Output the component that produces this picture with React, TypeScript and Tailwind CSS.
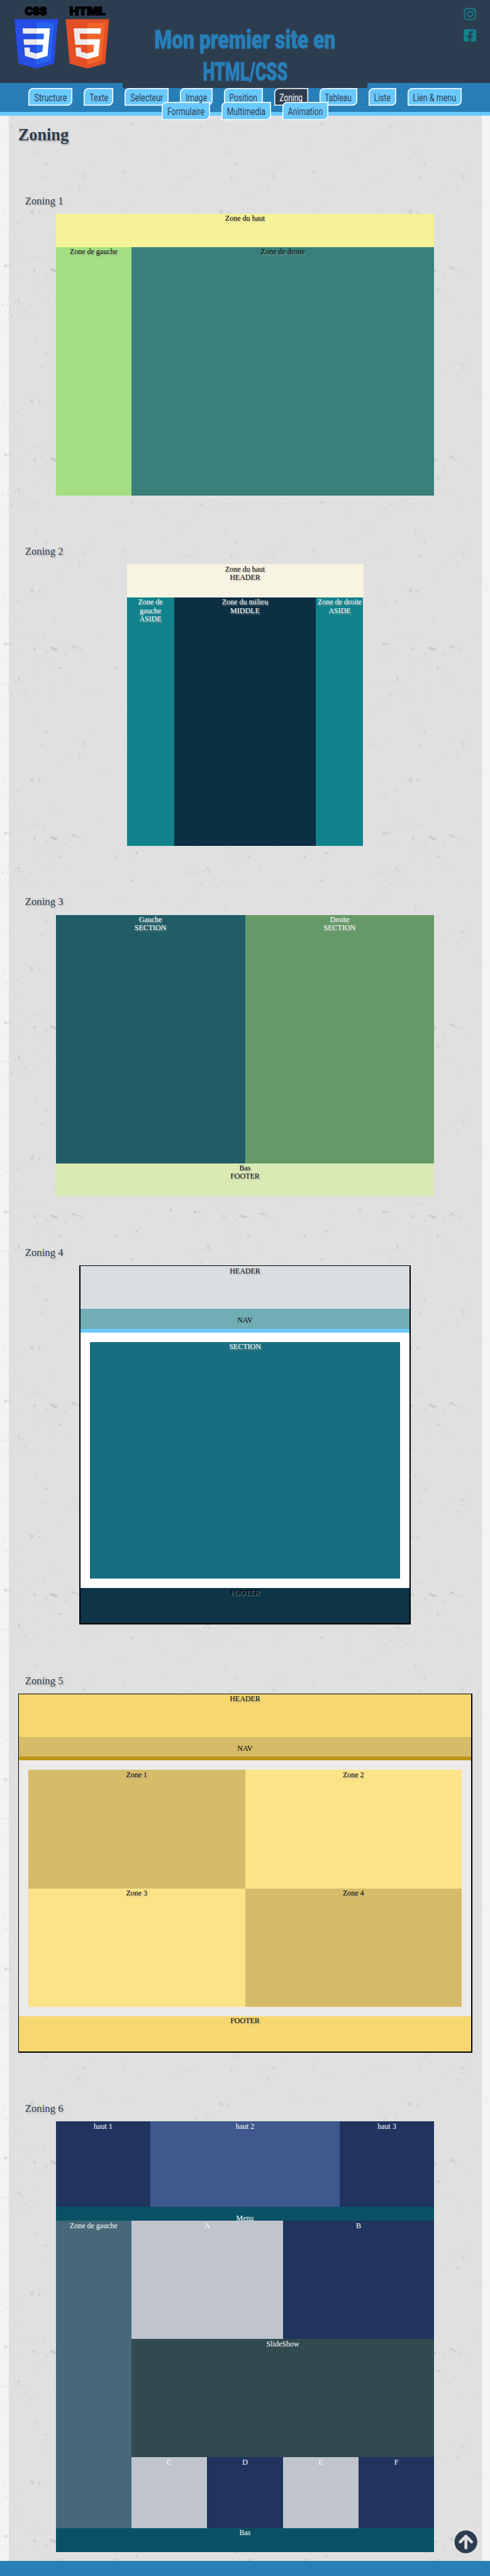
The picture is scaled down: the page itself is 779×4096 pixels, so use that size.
import { useLayoutEffect, useRef, useState, type ReactNode } from 'react';
import { FaArrowCircleUp, FaFacebookSquare, FaInstagram } from 'react-icons/fa';

/* Condensed display text: squeezes its content to the given width. */
function Fit({ width, className = '', children }: { width: number; className?: string; children: ReactNode }) {
  const ref = useRef<HTMLSpanElement>(null);
  const [scale, setScale] = useState(1);
  useLayoutEffect(() => {
    if (ref.current) setScale(width / ref.current.offsetWidth);
  }, [width]);
  return (
    <span className={`flex justify-center whitespace-nowrap ${className}`} style={{ width }}>
      <span ref={ref} className="block shrink-0" style={{ transform: `scaleX(${scale})` }}>
        {children}
      </span>
    </span>
  );
}

/* x, y, rx, ry of the specks in one 400px paper tile */
const specks: number[][] = [
  [78, 322, 2, 2], [97, 347, 2.5, 2], [194, 350, 1.5, 1.5], [264, 363, 2, 2], [89.5, 375.5, 2, 2],
  [262, 376.5, 1.3, 1.3], [176, 368, 1.5, 1.5], [179, 373, 1.6, 3], [180, 381, 1, 2], [172, 369, 1, 1],
  [168, 395, 2, 2], [292.5, 393.7, 2, 1.5], [395, 376, 2.2, 1.6], [388, 374, 1, 1.5], [67, 46, 4.5, 1.8],
  [68, 50, 3.5, 1.8], [83, 50, 2.2, 2], [38, 71, 1.8, 1.8], [13, 79, 1.8, 1.8], [9, 53, 1.5, 1.5],
  [224, 36, 2, 1.2], [216, 29, 1.6, 1.1], [268, 44, 1.5, 1.2], [346, 337, 1.7, 1.5], [116, 105, 1.2, 1.2],
  [79, 144, 2.4, 1.6], [93, 146, 1.7, 1.6], [45, 141, 1.4, 1.3], [12, 161.7, 4.2, 3.2], [21, 161, 2, 1.8],
  [72, 170, 2.6, 1.6], [74, 173, 2, 1.6], [110, 170, 4.5, 3], [117, 173, 5, 3], [155, 166.5, 4, 2.8],
  [163, 170, 2.6, 1.8], [170, 172, 1.6, 1.4], [174, 176, 1.5, 1.5], [37, 181, 1.4, 1.5], [99.5, 180, 2, 1.6],
  [138, 184, 2.3, 1.2], [80, 192, 1.1, 2], [100, 197, 1.4, 1.2], [11, 188, 1.4, 1.4], [184, 190, 1.2, 1],
  [361, 158, 2.8, 2.8], [307, 159, 1.8, 1.5], [368, 179, 1.3, 1.3], [289.5, 203, 2.8, 3], [295, 197, 1.4, 1.5],
  [245, 212, 2.5, 2.7], [125.5, 212, 2.7, 2.6], [131, 212, 1.2, 1.2], [107, 209.5, 1.4, 1.2], [76, 220, 1.2, 1],
  [279, 215, 1.2, 1], [148, 236.7, 1.7, 1.7], [40, 235, 2.8, 2.6], [42, 242, 1.7, 2.2], [33, 240, 1.8, 1.8],
  [48, 243, 1.4, 1.3], [103.5, 240, 1.7, 1.3], [280, 262, 2.7, 2.5], [52, 258.6, 2, 1.6], [25, 267, 2.2, 1.7],
  [46, 268, 1.2, 1.2], [62, 274, 1.7, 1.5], [70, 262.5, 1.4, 1.1], [77, 264, 1.7, 1], [106.5, 271.5, 1.7, 1.3],
  [202, 263.5, 1.2, 1.2], [177, 266, 1.3, 1], [5, 244.5, 1.8, 1.6], [15.5, 245, 1.4, 1.7], [396, 249, 1.6, 1.4],
  [13, 277, 1.3, 1.3], [13, 293.5, 1.6, 1.6], [340, 296, 1.3, 1.2], [336, 266, 1.2, 1.2], [393, 303, 1.2, 1.1],
  [377, 315, 1.1, 1], [16, 366, 1.3, 1.3], [154, 370, 1, 1], [125, 17, 1, 1], [283, 38, 1.2, 1], [58, 150, 1.2, 1],
  [145, 393, 1, 1], [255, 303, 1, 1.3], [371, 395, 1.3, 1], [32, 106, 1, 1],
  [42, 112, 1.3, 1], [208, 138, 1.2, 1.1], [117, 115, 1.2, 1.2],
];

function Paper() {
  return (
    <svg className="absolute inset-0 -z-10 h-full w-full" aria-hidden="true">
      <defs>
        <pattern id="paper" width="400" height="400" patternUnits="userSpaceOnUse" patternTransform="scale(0.752 0.7522)">
          <rect width="400" height="400" fill="#f3f3f3" />
          {specks.map(([x, y, rx, ry], i) => (
            <ellipse key={i} cx={x} cy={y} rx={rx} ry={ry} fill="#000" opacity="0.085" />
          ))}
        </pattern>
      </defs>
      <rect width="100%" height="100%" fill="url(#paper)" />
    </svg>
  );
}

function Logos() {
  return (
    <svg viewBox="30 4 200 142" className="mt-[3px] ml-[22.6px] h-[106.8px] w-[150.4px] overflow-visible">
      <g fontFamily="Inter, Roboto, sans-serif" fontWeight="900" fontSize="23.4" fill="#000" stroke="#000" strokeWidth="1.8">
        <text x="52" y="32" textLength="46.5" lengthAdjust="spacingAndGlyphs">CSS</text>
        <text x="146.5" y="32" textLength="76" lengthAdjust="spacingAndGlyphs">HTML</text>
      </g>
      <g transform="translate(23.9 40.6) scale(0.2039)">
        <path fill="#264de4" d="M71 460 30 0h451l-41 460-185 52z" />
        <path fill="#2965f1" d="m256 472 149-41 35-394H256z" />
        <path fill="#ebebeb" d="M256 94H114l5 56h137zM256 208H124l5 57h127zM256 355l-64-17-4-45h-56l7 89 117 32z" />
        <path fill="#fff" d="M256 94v56h80l-5 58h-75v57h70l-7 73-63 17v59l116-32 26-288z" />
      </g>
      <g transform="translate(132 40.6) scale(0.2039)">
        <path fill="#e34f26" d="M71 460 30 0h451l-41 460-185 52z" />
        <path fill="#f16529" d="m256 472 149-41 35-394H256z" />
        <path fill="#ebebeb" d="M256 208h-75l-5-58h80V94H114l15 171h127zM256 355l-64-17-4-45h-56l7 89 117 32z" />
        <path fill="#fff" d="M255 208v57h70l-7 73-63 17v59l116-32 16-174zM255 94v56h137l5-56z" />
      </g>
    </svg>
  );
}

function NavItem({ label, width, active = false }: { label: string; width: number; active?: boolean }) {
  return (
    <a
      className={`flex h-[28.6px] shrink-0 items-center justify-center rounded-tl-[8px] rounded-br-[8px] text-[17.4px] leading-[28px] shadow-[inset_0_0_0_1.5px_#fff] ${
        active ? 'bg-[#2d3d50] text-white' : 'bg-[#6ac9ff] text-[#2d3d50]'
      }`}
      style={{ width }}
    >
      <Fit width={width - 17.6} className="pt-px">{label}</Fit>
    </a>
  );
}

const row1: [string, number][] = [
  ['Structure', 70], ['Texte', 47.4], ['Selecteur', 70], ['Image', 51.2], ['Position', 61.8],
  ['Zoning', 54.1], ['Tableau', 60.2], ['Liste', 43.6], ['Lien & menu', 86.5],
];
const row2: [string, number][] = [['Formulaire', 76.8], ['Multimedia', 79], ['Animation', 73]];

const shade = '[text-shadow:1.5px_1.5px_1.5px_#a9a9a9b0]';

function Zone({ className = '', children }: { className?: string; children?: ReactNode }) {
  return <div className={`pt-[1.2px] ${className}`}>{children}</div>;
}

function Section({ title, children }: { title: string; children: ReactNode }) {
  return (
    <section>
      <div className="flex h-[109.8px] items-end pb-[10.2px] pl-[26.3px]">
        <h2 className={`text-[16.7px] leading-[20px] text-[#2d3d50] ${shade}`}>{title}</h2>
      </div>
      {children}
    </section>
  );
}

export default function App() {
  return (
    <div className="relative isolate h-[4096px] w-[779px] overflow-hidden font-['Liberation_Serif',serif]">
      <Paper />
      <header className="grid h-[131.6px] grid-cols-[1fr_2fr_1fr] bg-[#2d3d50]">
        <div><Logos /></div>
        <h1 className="relative z-10 flex h-[139.9px] flex-col items-center bg-[#2d3d50] pt-[38.2px] font-[Roboto,sans-serif] text-[40px] leading-[51.2px] font-black text-[#287fb8] [-webkit-text-stroke:0.8px_#287fb8]">
          <Fit width={288}>Mon premier site en</Fit>
          <Fit width={135}>HTML/CSS</Fit>
        </h1>
        <div className="flex flex-col items-end gap-[11.4px] pt-[11.4px] pr-[21px] text-[22.4px] text-[#11828b]">
          <FaInstagram />
          <FaFacebookSquare />
        </div>
      </header>
      <nav className="flex h-[52.7px] flex-col border-b-[6px] border-[#6ac9ff] bg-[#287fb8] pt-[8.3px] font-[Roboto,sans-serif]">
        <div className="flex h-[22.6px] shrink-0 items-start justify-center gap-[18.05px]">
          {row1.map(([label, width]) => (
            <NavItem key={label} label={label} width={width} active={label === 'Zoning'} />
          ))}
        </div>
        <div className="flex h-[22.6px] shrink-0 items-start justify-center gap-[18.05px]">
          {row2.map(([label, width]) => (
            <NavItem key={label} label={label} width={width} />
          ))}
        </div>
      </nav>

      <main className="-z-[1] mx-[13.5px] h-[3888.1px] bg-black/8 text-center text-[12.03px] leading-[13.54px] text-black">
        <div className="h-[45.9px] pt-[15.3px] pl-[15.2px] text-left">
          <h2 className="text-[26.3px] leading-[30px] font-bold text-[#2d3d50] [text-shadow:1.5px_1.5px_1.5px_#a9a9a9]">Zoning</h2>
        </div>

        <Section title="Zoning 1">
          <div className={`mx-auto w-[601.6px] ${shade}`}>
            <Zone className="h-[52.6px] bg-[#f6f299]">Zone du haut</Zone>
            <div className="flex h-[395px]">
              <Zone className="w-1/5 bg-[#a3df82]">Zone de gauche</Zone>
              <Zone className="w-4/5 bg-[#388079]">Zone de droite</Zone>
            </div>
          </div>
        </Section>

        <Section title="Zoning 2">
          <div className={`mx-auto w-[376px] ${shade}`}>
            <Zone className="h-[52.6px] bg-[#f8f4e3]">Zone du haut<br />HEADER</Zone>
            <div className="flex h-[394.9px] text-white">
              <Zone className="w-1/5 bg-[#11828b]">Zone de<br />gauche<br />ASIDE</Zone>
              <Zone className="w-3/5 bg-[#0d2f44]">Zone du milieu<br />MIDDLE</Zone>
              <Zone className="w-1/5 bg-[#11828b] whitespace-nowrap">Zone de droite<br />ASIDE</Zone>
            </div>
          </div>
        </Section>

        <Section title="Zoning 3">
          <div className={`mx-auto w-[601.6px] ${shade}`}>
            <div className="flex h-[394.9px] text-white">
              <Zone className="w-1/2 bg-[#205d67]">Gauche<br />SECTION</Zone>
              <Zone className="w-1/2 bg-[#659a68]">Droite<br />SECTION</Zone>
            </div>
            <Zone className="h-[52.6px] bg-[#d9eab5]">Bas<br />FOOTER</Zone>
          </div>
        </Section>

        <Section title="Zoning 4">
          <div className={`mx-auto w-[526.4px] bg-black p-[1.5px] ${shade}`}>
            <Zone className="h-[67.7px] bg-[#d8dee1]">HEADER</Zone>
            <Zone className="h-[37.6px] border-b-[6px] border-[#6ac9fd] bg-[#71adb5] pt-[12px] [text-shadow:none]">NAV</Zone>
            <div className="h-[406.2px] bg-white px-[15px] pt-[15px]">
              <Zone className="h-[376.1px] bg-[#186e81] text-white">SECTION</Zone>
            </div>
            <Zone className="h-[56.5px] bg-[#0d3447]">FOOTER</Zone>
          </div>
        </Section>

        <Section title="Zoning 5">
          <div className={`mx-auto w-[722px] bg-black p-[1.5px] ${shade}`}>
            <Zone className="h-[67.7px] bg-[#f7d76f]">HEADER</Zone>
            <Zone className="h-[37.6px] border-b-[6px] border-[#c19717] bg-[#d6bb69] pt-[12px] [text-shadow:none]">NAV</Zone>
            <div className="h-[406.2px] bg-[#ecebe9] px-[15px] pt-[15px]">
              <div className="grid h-[376.1px] grid-cols-2 grid-rows-2">
                <Zone className="bg-[#d6bb69]">Zone 1</Zone>
                <Zone className="bg-[#fce388]">Zone 2</Zone>
                <Zone className="bg-[#fce388]">Zone 3</Zone>
                <Zone className="bg-[#d6bb69]">Zone 4</Zone>
              </div>
            </div>
            <Zone className="h-[56.4px] bg-[#f7d76f]">FOOTER</Zone>
          </div>
        </Section>

        <Section title="Zoning 6">
          <div className="mx-auto w-[601.6px] text-white">
            <div className="flex h-[135.4px]">
              <Zone className="w-1/4 bg-[#213460]">haut 1</Zone>
              <Zone className="w-1/2 bg-[#3f588d]">haut 2</Zone>
              <Zone className="w-1/4 bg-[#213460]">haut 3</Zone>
            </div>
            <Zone className="h-[22.6px] bg-[#0b5165] pt-[12px]">Menu</Zone>
            <div className="flex h-[488.9px]">
              <Zone className="w-1/5 bg-[#466878]">Zone de gauche</Zone>
              <div className="w-4/5">
                <div className="flex h-[188.05px]">
                  <Zone className="w-1/2 bg-[#c0c4cd]">A</Zone>
                  <Zone className="w-1/2 bg-[#213460]">B</Zone>
                </div>
                <Zone className="h-[188.05px] bg-[#314a50]">SlideShow</Zone>
                <div className="grid h-[112.8px] grid-cols-4">
                  <Zone className="bg-[#c0c4cd]">C</Zone>
                  <Zone className="bg-[#213460]">D</Zone>
                  <Zone className="bg-[#c0c4cd]">E</Zone>
                  <Zone className="bg-[#213460]">F</Zone>
                </div>
              </div>
            </div>
            <Zone className="h-[37.6px] bg-[#0b5165]">Bas</Zone>
          </div>
        </Section>
      </main>

      <footer className="h-[24px] bg-[#287fb8]" />
      <a className="absolute right-[20.1px] bottom-[35.6px] text-[37.4px] text-[#2d3d50]">
        <FaArrowCircleUp />
      </a>
    </div>
  );
}
